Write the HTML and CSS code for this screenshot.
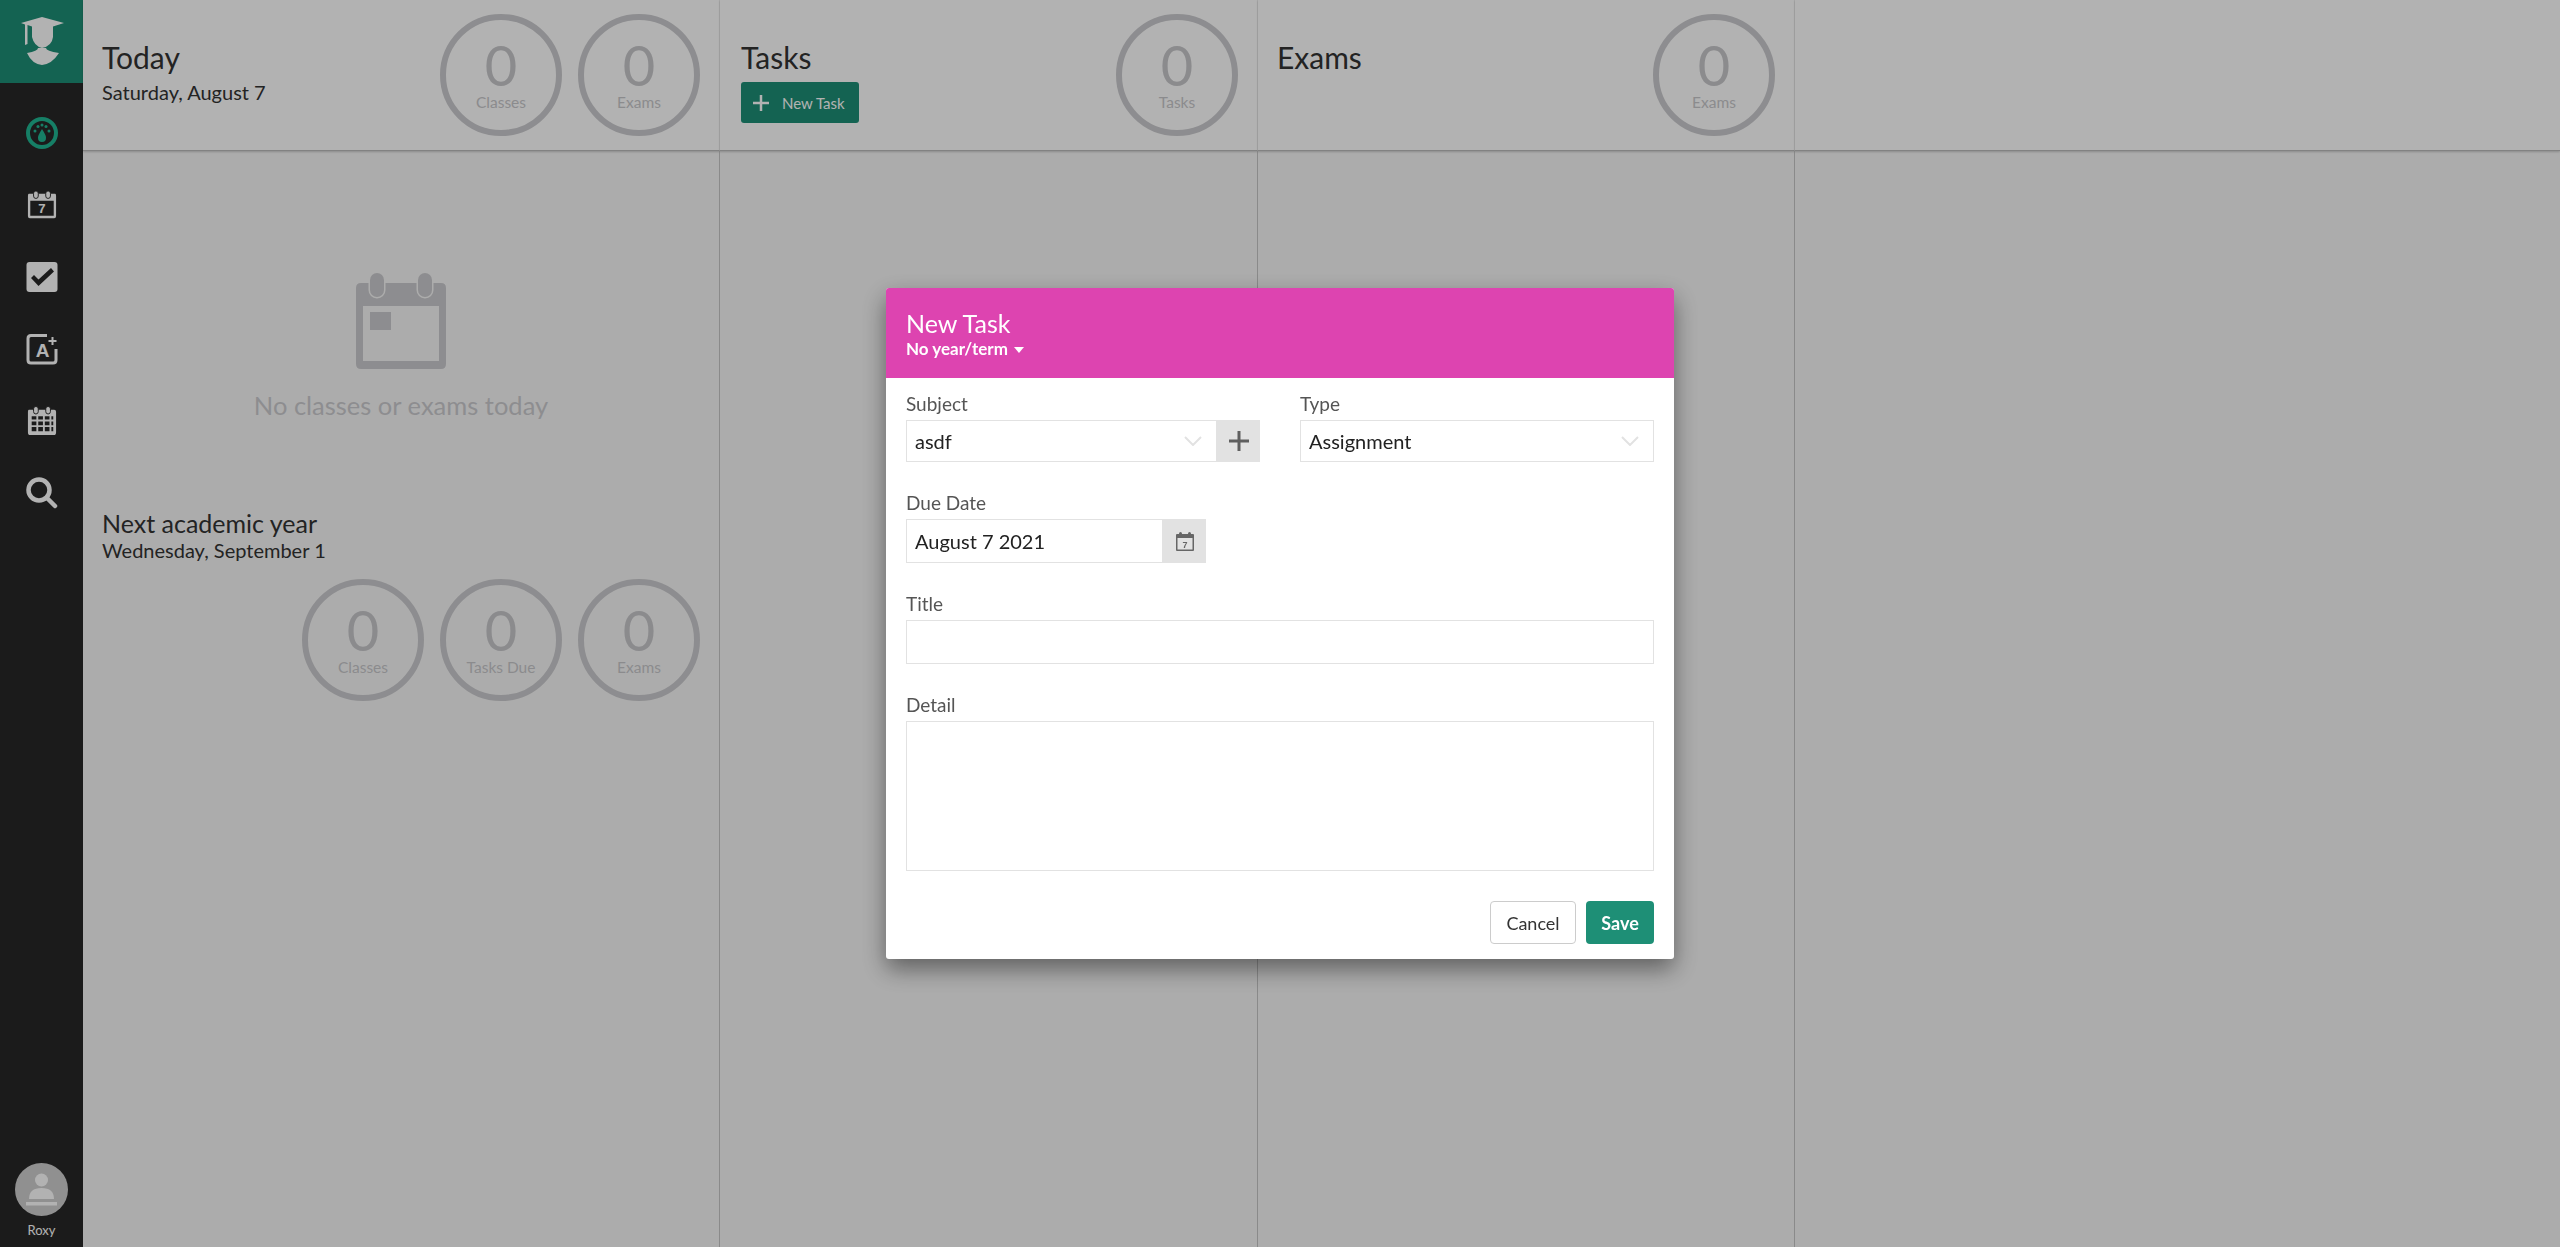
FILE: index.html
```html
<!DOCTYPE html>
<html lang="en">
<head>
    <meta charset="UTF-8">
    <meta name="viewport" content="width=device-width, initial-scale=1.0">
    <title>Overview</title>
    <link rel="stylesheet" href="styles.css">
</head>
<body>
    <div class="app">
        <aside class="sidebar">
            <div class="logo">
                <svg width="83" height="83" viewBox="0 0 83 83">
                    <path d="M21 23 42 17 64 23 53 26.500V37Q52 46 42 48 34 46 32 37V26.500L27.500 25V44L25 45V24.500Z" fill="#fff"/>
                    <path d="M27 53Q38 51 38 48H46Q46 51 59 53 52 64 42 65 32 64 27 53Z" fill="#fff"/>
                </svg>
            </div>
            <nav class="nav">
                <a class="nav-item">
                    <svg width="32" height="32" viewBox="0 0 32 32">
                        <circle cx="16" cy="16" r="14" fill="none" stroke="#20b692" stroke-width="4"/>
                        <g fill="#20b692">
                            <circle cx="9" cy="14" r="1.500"/><circle cx="12" cy="9.500" r="1.500"/>
                            <circle cx="16" cy="8" r="1.500"/><circle cx="20" cy="9.500" r="1.500"/>
                            <circle cx="23" cy="14" r="1.500"/>
                            <path d="M16 12Q20.500 19 20 21A4 4 0 0 1 12 21Q11.500 19 16 12Z"/>
                        </g>
                    </svg>
                </a>
                <a class="nav-item">
                    <svg width="30" height="30" viewBox="0 0 32 32">
                        <path fill-rule="evenodd" fill="#fff" d="M2 4H30Q31 4 31 6V28Q31 30 29 30H3Q1 30 1 28V6Q1 4 2 4ZM3.500 11.500V27.500H28.500V11.500Z"/>
                        <rect x="7" y="1" width="5" height="8" rx="2.500" fill="#fff" stroke="#282828"/>
                        <rect x="20" y="1" width="5" height="8" rx="2.500" fill="#fff" stroke="#282828"/>
                        <text x="16" y="25" class="icon-num">7</text>
                    </svg>
                </a>
                <a class="nav-item">
                    <svg width="32" height="32" viewBox="0 0 32 32">
                        <rect x="0.500" y="1" width="31" height="30" rx="3" fill="#fff"/>
                        <path d="M5 17 8 14 12.500 18.500 25 7 28 10.500 12.500 25Z" fill="#282828"/>
                    </svg>
                </a>
                <a class="nav-item">
                    <svg width="32" height="32" viewBox="0 0 32 32">
                        <path d="M21 2.500H5Q2 2.500 2 5.500V27Q2 30 5 30H27Q30 30 30 27V16" fill="none" stroke="#fff" stroke-width="3"/>
                        <text x="16.500" y="24" class="icon-letter">A</text>
                        <path d="M26.500 4V12M22.500 8H30.500" stroke="#fff" stroke-width="2" fill="none"/>
                    </svg>
                </a>
                <a class="nav-item">
                    <svg width="30" height="32" viewBox="0 0 32 32">
                        <path fill-rule="evenodd" fill="#fff" d="M2 4H29Q31 4 31 6V28Q31 31 29 31H3Q1 31 1 28V6Q1 4 2 4ZM5 11V14.500H10V11ZM12 11V14.500H17V11ZM19 11V14.500H24V11ZM5 16.500V20.500H10V16.500ZM12 16.500V20.500H17V16.500ZM19 16.500V20.500H24V16.500ZM5 22.500V27H10V22.500ZM12 22.500V27H17V22.500ZM19 22.500V27H24V22.500ZM26 11V14.500H28V11ZM26 16.500V20.500H28V16.500ZM26 22.500V27H28V22.500Z"/>
                        <rect x="7" y="0.500" width="5" height="8" rx="2.500" fill="#fff" stroke="#282828"/>
                        <rect x="20" y="0.500" width="5" height="8" rx="2.500" fill="#fff" stroke="#282828"/>
                    </svg>
                </a>
                <a class="nav-item">
                    <svg width="32" height="32" viewBox="0 0 32 32">
                        <circle cx="13" cy="13" r="10.500" fill="none" stroke="#fff" stroke-width="4.500"/>
                        <path d="M21 21 29 29" stroke="#fff" stroke-width="4.500" stroke-linecap="round"/>
                    </svg>
                </a>
            </nav>
            <div class="profile">
                <svg width="53" height="53" viewBox="0 0 53 53">
                    <circle cx="26.500" cy="26.500" r="26.500" fill="#cfcfcf"/>
                    <circle cx="26.500" cy="17" r="6.500" fill="#fff"/>
                    <path d="M14 36Q14 25 26.500 25 39 25 39 36Z" fill="#fff"/>
                    <rect x="11" y="39" width="31" height="3.500" fill="#fff"/>
                </svg>
                <span class="profile-name">Roxy</span>
            </div>
        </aside>

        <main class="board">
            <section class="col col-today">
                <header class="col-head">
                    <div class="head-text">
                        <h2>Today</h2>
                        <p>Saturday, August 7</p>
                    </div>
                    <div class="rings">
                        <div class="ring"><b>0</b><span>Classes</span></div>
                        <div class="ring"><b>0</b><span>Exams</span></div>
                    </div>
                </header>
                <div class="col-body">
                    <div class="empty">
                        <svg width="90" height="96" viewBox="0 0 90 96">
                            <path fill-rule="evenodd" fill="#cbcbce" d="M5 10H85Q90 10 90 15V91Q90 96 85 96H5Q0 96 0 91V15Q0 10 5 10ZM7 33V88H83V33Z"/>
                            <rect x="14" y="0" width="14" height="24" rx="7" fill="#cbcbce" stroke="#f7f7f7" stroke-width="3" paint-order="stroke"/>
                            <rect x="62" y="0" width="14" height="24" rx="7" fill="#cbcbce" stroke="#f7f7f7" stroke-width="3" paint-order="stroke"/>
                            <rect x="14" y="39" width="21" height="18" fill="#cbcbce"/>
                        </svg>
                        <p>No classes or exams today</p>
                    </div>
                    <div class="next">
                        <h3>Next academic year</h3>
                        <p>Wednesday, September 1</p>
                        <div class="rings">
                            <div class="ring"><b>0</b><span>Classes</span></div>
                            <div class="ring"><b>0</b><span>Tasks Due</span></div>
                            <div class="ring"><b>0</b><span>Exams</span></div>
                        </div>
                    </div>
                </div>
            </section>
            <section class="col col-tasks">
                <header class="col-head">
                    <div class="head-text">
                        <h2>Tasks</h2>
                        <button class="new-btn">
                            <svg width="16" height="16" viewBox="0 0 16 16"><path d="M8 0V16M0 8H16" stroke="#fff" stroke-width="2.500"/></svg>
                            New Task
                        </button>
                    </div>
                    <div class="rings">
                        <div class="ring"><b>0</b><span>Tasks</span></div>
                    </div>
                </header>
                <div class="col-body"></div>
            </section>
            <section class="col col-exams">
                <header class="col-head">
                    <div class="head-text">
                        <h2>Exams</h2>
                    </div>
                    <div class="rings">
                        <div class="ring"><b>0</b><span>Exams</span></div>
                    </div>
                </header>
                <div class="col-body"></div>
            </section>
            <section class="col col-rest">
                <header class="col-head"></header>
                <div class="col-body"></div>
            </section>
        </main>
    </div>

    <div class="overlay">
        <div class="modal">
            <div class="modal-head">
                <h2>New Task</h2>
                <p>No year/term <span class="caret"></span></p>
            </div>
            <div class="modal-body">
                <div class="row-two">
                    <div class="field">
                        <label>Subject</label>
                        <div class="joined">
                            <div class="select">asdf
                                <svg class="chev" width="18" height="10" viewBox="0 0 18 10"><path d="M1 1 9 9 17 1" fill="none" stroke="#e2e2e2" stroke-width="2"/></svg>
                            </div>
                            <button class="add-btn">
                                <svg width="20" height="20" viewBox="0 0 20 20"><path d="M10 0V20M0 10H20" stroke="#5f5f5f" stroke-width="3"/></svg>
                            </button>
                        </div>
                    </div>
                    <div class="field">
                        <label>Type</label>
                        <div class="select">Assignment
                            <svg class="chev" width="18" height="10" viewBox="0 0 18 10"><path d="M1 1 9 9 17 1" fill="none" stroke="#e2e2e2" stroke-width="2"/></svg>
                        </div>
                    </div>
                </div>
                <div class="field">
                    <label>Due Date</label>
                    <div class="joined date">
                        <input class="input" type="text" value="August 7 2021">
                        <button class="add-btn">
                            <svg width="18" height="19" viewBox="0 0 18 19">
                                <path fill-rule="evenodd" fill="#666" d="M1 2H17Q18 2 18 3V18Q18 19 17 19H1Q0 19 0 18V3Q0 2 1 2ZM1.500 6V17.500H16.500V6Z"/>
                                <rect x="3" y="0" width="3" height="5" rx="1.500" fill="#666"/>
                                <rect x="12" y="0" width="3" height="5" rx="1.500" fill="#666"/>
                                <text x="9" y="15.500" class="cal-num">7</text>
                            </svg>
                        </button>
                    </div>
                </div>
                <div class="field">
                    <label>Title</label>
                    <input class="input" type="text">
                </div>
                <div class="field">
                    <label>Detail</label>
                    <textarea class="input area"></textarea>
                </div>
                <div class="modal-foot">
                    <button class="btn btn-cancel">Cancel</button>
                    <button class="btn btn-save">Save</button>
                </div>
            </div>
        </div>
    </div>
</body>
</html>
```

FILE: styles.css
```css
* {
    margin: 0;
    padding: 0;
    box-sizing: border-box;
}
body {
    font-family: Lato, "Open Sans", sans-serif;
    background-color: #f7f7f7;
    color: #333;
    height: 100vh;
    overflow: hidden;
}
button, input, textarea {
    font-family: inherit;
}
.app {
    display: flex;
    height: 100vh;
}

/* sidebar */
.sidebar {
    width: 83px;
    flex-shrink: 0;
    background: #282828;
    display: flex;
    flex-direction: column;
    align-items: center;
}
.logo {
    width: 83px;
    height: 83px;
    background: #1e8f76;
}
.logo svg {
    display: block;
}
.nav {
    margin-top: 14px;
}
.nav-item {
    display: flex;
    align-items: center;
    justify-content: center;
    width: 83px;
    height: 72px;
}
.icon-num {
    font: 700 14px "Liberation Sans", sans-serif;
    fill: #fff;
    text-anchor: middle;
}
.icon-letter {
    font: 700 19px "Liberation Sans", sans-serif;
    fill: #fff;
    text-anchor: middle;
}
.cal-num {
    font: 700 9px "Liberation Sans", sans-serif;
    fill: #666;
    text-anchor: middle;
}
.profile {
    margin-top: auto;
    padding-bottom: 9px;
    display: flex;
    flex-direction: column;
    align-items: center;
}
.profile-name {
    margin-top: 6px;
    font-size: 13px;
    color: #fff;
}

/* columns */
.board {
    flex: 1;
    display: flex;
}
.col {
    display: flex;
    flex-direction: column;
}
.col-today {
    width: 637px;
}
.col-tasks {
    width: 538px;
}
.col-exams {
    width: 537px;
}
.col-rest {
    flex: 1;
}
.col-head {
    height: 151px;
    background: #fff;
    border-right: 1px solid #f0f0f0;
    border-bottom: 1px solid #bbb;
    box-shadow: 0 1px 2px rgba(0, 0, 0, 0.2);
    padding: 14px 19px 0;
    display: flex;
    justify-content: space-between;
}
.col-tasks .col-head {
    padding-left: 21px;
}
.col-rest .col-head {
    border-right: none;
}
.head-text {
    padding-top: 25px;
}
.head-text h2 {
    font-size: 30px;
    font-weight: 400;
    color: #333;
    line-height: 36px;
}
.head-text p {
    font-size: 20px;
    color: #333;
    margin-top: 5px;
}
.col-body {
    flex: 1;
    border-right: 1px solid #c6c6c6;
}
.col-rest .col-body {
    border-right: none;
}
.rings {
    display: flex;
    justify-content: flex-end;
    gap: 16px;
}
.ring {
    width: 122px;
    height: 122px;
    border: 6px solid #cbcbce;
    border-radius: 50%;
    display: flex;
    flex-direction: column;
    align-items: center;
    color: #c8c8cb;
}
.ring b {
    font-size: 56px;
    font-weight: 400;
    line-height: 50px;
    margin-top: 20px;
}
.ring span {
    font-size: 15.500px;
    line-height: 18px;
    margin-top: 3px;
}
.new-btn {
    display: flex;
    align-items: center;
    gap: 13px;
    width: 118px;
    height: 41px;
    margin-top: 7px;
    padding-left: 12px;
    background: #1e8f76;
    color: #fff;
    border: none;
    border-radius: 3px;
    font-size: 15px;
}

/* today column */
.empty {
    margin-top: 122px;
    text-align: center;
}
.empty svg {
    display: block;
    margin: 0 auto;
    overflow: visible;
}
.empty p {
    margin-top: 21px;
    font-size: 25.500px;
    color: #cbcbce;
}
.next {
    margin-top: 88px;
    padding: 0 19px;
}
.next h3 {
    font-size: 25px;
    font-weight: 400;
    color: #333;
}
.next p {
    font-size: 20px;
    margin-bottom: 17px;
}

/* dialog */
.overlay {
    position: fixed;
    top: 0;
    left: 0;
    right: 0;
    bottom: 0;
    background: rgba(0, 0, 0, 0.3);
    display: flex;
    align-items: center;
    justify-content: center;
}
.modal {
    width: 788px;
    height: 671px;
    background: #fff;
    border-radius: 3px;
    overflow: hidden;
    box-shadow: 0 10px 25px rgba(0, 0, 0, 0.45);
}
.modal-head {
    height: 90px;
    background: #dd44b0;
    color: #fff;
    padding: 20px 20px 0;
}
.modal-head h2 {
    font-size: 25px;
    font-weight: 400;
    line-height: 30px;
}
.modal-head p {
    font-size: 17px;
    font-weight: 700;
    line-height: 22px;
}
.caret {
    display: inline-block;
    border-left: 5px solid transparent;
    border-right: 5px solid transparent;
    border-top: 6px solid #fff;
    vertical-align: 2px;
    margin-left: 2px;
}
.modal-body {
    padding: 14px 20px 0;
}
.row-two {
    display: grid;
    grid-template-columns: 1fr 1fr;
    gap: 40px;
    margin-bottom: 29px;
}
.row-two .field {
    margin-bottom: 0;
}
.field {
    margin-bottom: 29px;
}
.field label {
    display: block;
    font-size: 19px;
    line-height: 24px;
    color: #555;
    margin-bottom: 4px;
}
.select {
    flex: 1;
    display: flex;
    align-items: center;
    justify-content: space-between;
    height: 42px;
    padding: 0 14px 0 8px;
    border: 1px solid #e2e2e2;
    font-size: 20px;
    color: #222;
}
.joined {
    display: flex;
}
.add-btn {
    width: 43px;
    flex-shrink: 0;
    background: #e2e2e2;
    border: none;
    display: flex;
    align-items: center;
    justify-content: center;
}
.input {
    display: block;
    width: 100%;
    height: 44px;
    padding: 0 8px;
    border: 1px solid #e2e2e2;
    border-radius: 0;
    font-size: 20px;
    color: #222;
    outline: none;
}
.date {
    width: 300px;
}
.date .input {
    flex: 1;
    min-width: 0;
}
.area {
    height: 150px;
    resize: none;
}
.modal-foot {
    display: flex;
    justify-content: flex-end;
    gap: 10px;
    margin-top: 30px;
}
.btn {
    height: 43px;
    border-radius: 4px;
    font-size: 18px;
}
.btn-cancel {
    width: 86px;
    background: #fff;
    border: 1px solid #ccc;
    color: #333;
}
.btn-save {
    width: 68px;
    background: #1e8f76;
    border: none;
    color: #fff;
    font-weight: 700;
}
```
